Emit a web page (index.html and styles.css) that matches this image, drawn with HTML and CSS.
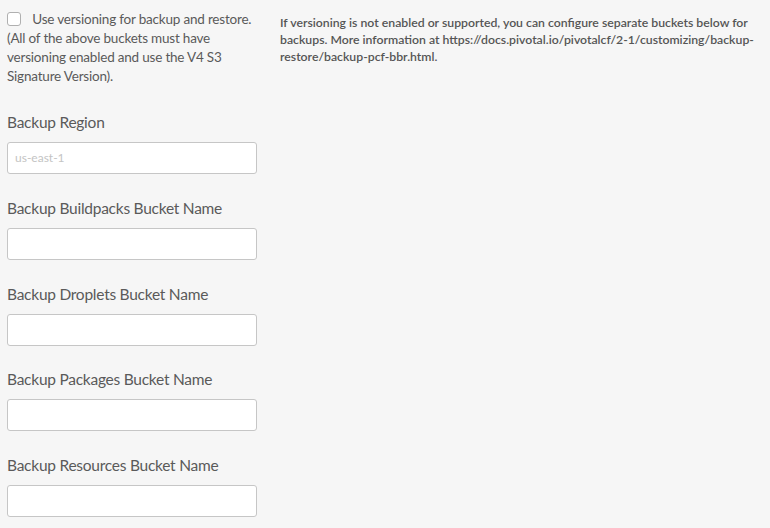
FILE: index.html
```html
<!DOCTYPE html>
<html>
<head>
<meta charset="utf-8">
<link rel="stylesheet" href="styles.css">
</head>
<body>
<div class="page">
  <div class="left">
    <div class="check-row">
      <span class="checkbox"></span>
      <span>Use versioning for backup and restore. (All of the above buckets must have versioning enabled and use the V4 S3 Signature Version).</span>
    </div>
    <div class="field">
      <div class="label">Backup Region</div>
      <div class="input placeholder">us-east-1</div>
    </div>
    <div class="field">
      <div class="label">Backup Buildpacks Bucket Name</div>
      <div class="input"></div>
    </div>
    <div class="field">
      <div class="label">Backup Droplets Bucket Name</div>
      <div class="input"></div>
    </div>
    <div class="field">
      <div class="label">Backup Packages Bucket Name</div>
      <div class="input"></div>
    </div>
    <div class="field">
      <div class="label">Backup Resources Bucket Name</div>
      <div class="input"></div>
    </div>
  </div>
  <div class="right">
    <p class="help">If versioning is not enabled or supported, you can configure separate buckets below for backups. More information at https://docs.pivotal.io/pivotalcf/2-1/customizing/backup-restore/backup-pcf-bbr.html.</p>
  </div>
</div>
</body>
</html>
```
FILE: styles.css
```css
html, body {
  margin: 0;
  padding: 0;
  background: #f6f6f6;
}
body {
  font-family: Lato, "Open Sans", sans-serif;
  color: #555;
}
.page {
  display: flex;
  gap: 23px;
  padding: 0 0 0 7px;
}
.left {
  width: 250px;
  flex: none;
}
.check-row {
  padding-top: 10px;
  font-size: 13.5px;
  letter-spacing: -0.2px;
  line-height: 19px;
  color: #5a5a5a;
}
.checkbox {
  display: inline-block;
  width: 12px;
  height: 12px;
  border: 1px solid #b0b0b0;
  border-radius: 3px;
  background: #fff;
  vertical-align: -2px;
  margin-right: 8px;
}
.field {
  margin-top: 23.75px;
}
.check-row + .field {
  margin-top: 26px;
}
.label {
  font-size: 15.5px;
  letter-spacing: -0.25px;
  line-height: 20px;
  color: #5a5a5a;
  margin-bottom: 10px;
}
.input {
  box-sizing: border-box;
  height: 32px;
  width: 250px;
  background: #fff;
  border: 1px solid #c6c6c6;
  border-radius: 3px;
  font-size: 12px;
  line-height: 30px;
  padding: 0 7px;
  color: #c4c4c4;
}
.right {
  flex: 1;
  padding-right: 10px;
}
.help {
  margin: 14px 0 0 0;
  font-size: 12.25px;
  line-height: 17px;
  font-weight: 600;
  color: #555;
}
```
